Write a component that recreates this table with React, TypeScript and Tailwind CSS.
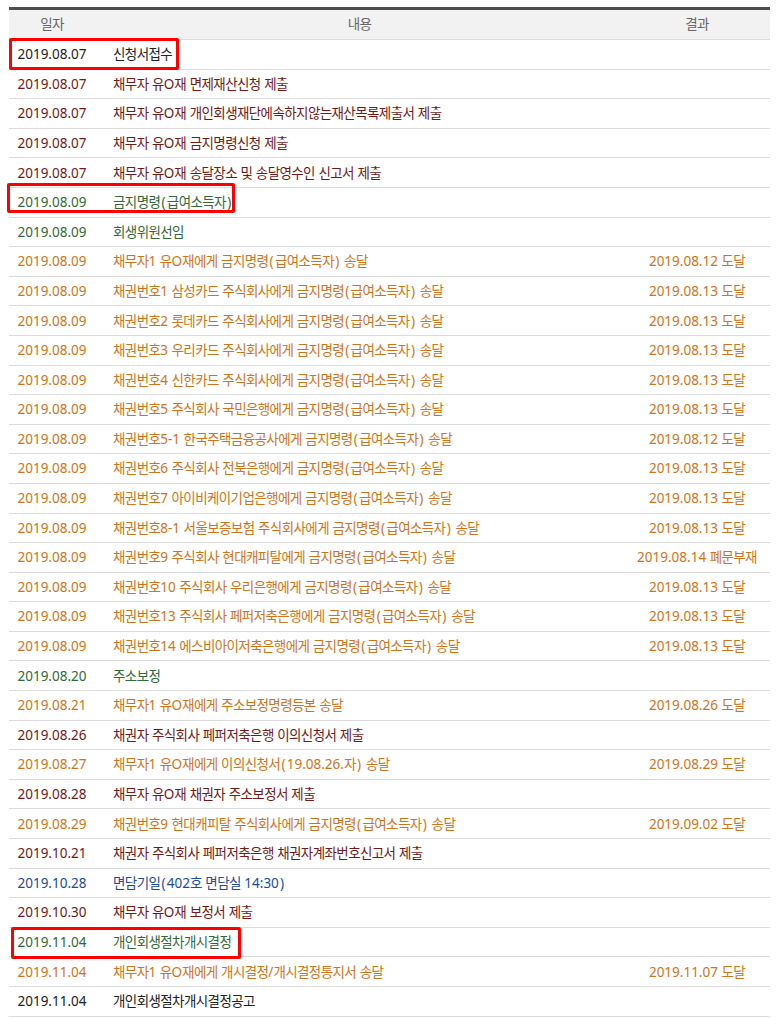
import React from "react";

type Row = { d: string; c: string; r?: string; t: "k" | "m" | "g" | "o" | "b" };

const rows: Row[] = [
  { d: "2019.08.07", c: "신청서접수", t: "k" },
  { d: "2019.08.07", c: "채무자 유O재 면제재산신청 제출", t: "m" },
  { d: "2019.08.07", c: "채무자 유O재 개인회생재단에속하지않는재산목록제출서 제출", t: "m" },
  { d: "2019.08.07", c: "채무자 유O재 금지명령신청 제출", t: "m" },
  { d: "2019.08.07", c: "채무자 유O재 송달장소 및 송달영수인 신고서 제출", t: "m" },
  { d: "2019.08.09", c: "금지명령(급여소득자)", t: "g" },
  { d: "2019.08.09", c: "회생위원선임", t: "g" },
  { d: "2019.08.09", c: "채무자1 유O재에게 금지명령(급여소득자) 송달", r: "2019.08.12 도달", t: "o" },
  { d: "2019.08.09", c: "채권번호1 삼성카드 주식회사에게 금지명령(급여소득자) 송달", r: "2019.08.13 도달", t: "o" },
  { d: "2019.08.09", c: "채권번호2 롯데카드 주식회사에게 금지명령(급여소득자) 송달", r: "2019.08.13 도달", t: "o" },
  { d: "2019.08.09", c: "채권번호3 우리카드 주식회사에게 금지명령(급여소득자) 송달", r: "2019.08.13 도달", t: "o" },
  { d: "2019.08.09", c: "채권번호4 신한카드 주식회사에게 금지명령(급여소득자) 송달", r: "2019.08.13 도달", t: "o" },
  { d: "2019.08.09", c: "채권번호5 주식회사 국민은행에게 금지명령(급여소득자) 송달", r: "2019.08.13 도달", t: "o" },
  { d: "2019.08.09", c: "채권번호5-1 한국주택금융공사에게 금지명령(급여소득자) 송달", r: "2019.08.12 도달", t: "o" },
  { d: "2019.08.09", c: "채권번호6 주식회사 전북은행에게 금지명령(급여소득자) 송달", r: "2019.08.13 도달", t: "o" },
  { d: "2019.08.09", c: "채권번호7 아이비케이기업은행에게 금지명령(급여소득자) 송달", r: "2019.08.13 도달", t: "o" },
  { d: "2019.08.09", c: "채권번호8-1 서울보증보험 주식회사에게 금지명령(급여소득자) 송달", r: "2019.08.13 도달", t: "o" },
  { d: "2019.08.09", c: "채권번호9 주식회사 현대캐피탈에게 금지명령(급여소득자) 송달", r: "2019.08.14 폐문부재", t: "o" },
  { d: "2019.08.09", c: "채권번호10 주식회사 우리은행에게 금지명령(급여소득자) 송달", r: "2019.08.13 도달", t: "o" },
  { d: "2019.08.09", c: "채권번호13 주식회사 페퍼저축은행에게 금지명령(급여소득자) 송달", r: "2019.08.13 도달", t: "o" },
  { d: "2019.08.09", c: "채권번호14 에스비아이저축은행에게 금지명령(급여소득자) 송달", r: "2019.08.13 도달", t: "o" },
  { d: "2019.08.20", c: "주소보정", t: "g" },
  { d: "2019.08.21", c: "채무자1 유O재에게 주소보정명령등본 송달", r: "2019.08.26 도달", t: "o" },
  { d: "2019.08.26", c: "채권자 주식회사 페퍼저축은행 이의신청서 제출", t: "m" },
  { d: "2019.08.27", c: "채무자1 유O재에게 이의신청서(19.08.26.자) 송달", r: "2019.08.29 도달", t: "o" },
  { d: "2019.08.28", c: "채무자 유O재 채권자 주소보정서 제출", t: "m" },
  { d: "2019.08.29", c: "채권번호9 현대캐피탈 주식회사에게 금지명령(급여소득자) 송달", r: "2019.09.02 도달", t: "o" },
  { d: "2019.10.21", c: "채권자 주식회사 페퍼저축은행 채권자계좌번호신고서 제출", t: "m" },
  { d: "2019.10.28", c: "면담기일(402호 면담실 14:30)", t: "b" },
  { d: "2019.10.30", c: "채무자 유O재 보정서 제출", t: "m" },
  { d: "2019.11.04", c: "개인회생절차개시결정", t: "g" },
  { d: "2019.11.04", c: "채무자1 유O재에게 개시결정/개시결정통지서 송달", r: "2019.11.07 도달", t: "o" },
  { d: "2019.11.04", c: "개인회생절차개시결정공고", t: "k" },
];

const colorCls: Record<Row["t"], string> = {
  k: "text-[#222222]",
  m: "text-[#741818]",
  g: "text-[#33693a]",
  o: "text-[#d0741c]",
  b: "text-[#1c4c9c]",
};

function Txt({ s }: { s: string }) {
  const parts = s.match(/[\uAC00-\uD7A3]+|[()]|[^\uAC00-\uD7A3()]+/g) || [];
  return (
    <>
      {parts.map((p, i) =>
        /[\uAC00-\uD7A3]/.test(p) ? (
          <span key={i} className="text-[13.5px] tracking-[-0.6px]">
            {p}
          </span>
        ) : p === "(" || p === ")" ? (
          <span key={i} className="px-[1.25px]">
            {p}
          </span>
        ) : (
          <span key={i}>{p}</span>
        )
      )}
    </>
  );
}

export default function App() {
  return (
    <div
      className="relative min-h-[1018px] w-[777px] bg-white pt-[7px] text-[13.5px]"
      style={{ fontFamily: '"Noto Sans", "Noto Sans CJK KR", sans-serif' }}
    >
      <div className="ml-[9px] w-[761px] border-t-[3px] border-[#4d4d4d]">
        <div className="grid h-[30px] grid-cols-[86px_529px_146px] items-center border-b border-[#dcdcdc] bg-[#f2f2f2] text-[#666666]">
          <div className="text-center">
            <Txt s="일자" />
          </div>
          <div className="text-center">
            <Txt s="내용" />
          </div>
          <div className="text-center">
            <Txt s="결과" />
          </div>
        </div>
        {rows.map((r, i) => (
          <div
            key={i}
            className={`grid h-[29.6px] grid-cols-[86px_529px_146px] items-center border-b border-[#dcdcdc] whitespace-nowrap ${colorCls[r.t]}`}
          >
            <div className="text-center">{r.d}</div>
            <div className="pl-[18px]">
              <Txt s={r.c} />
            </div>
            <div className="text-center">{r.r ? <Txt s={r.r} /> : null}</div>
          </div>
        ))}
      </div>

      <div className="pointer-events-none absolute left-[9px] top-[38px] h-[32px] w-[170px] rounded-[2px] border-[3px] border-[#ff0000]" />
      <div className="pointer-events-none absolute left-[7px] top-[183px] h-[30px] w-[228px] rounded-[2px] border-[3px] border-[#ff0000]" />
      <div className="pointer-events-none absolute left-[11px] top-[927px] h-[32px] w-[230px] rounded-[2px] border-[3px] border-[#ff0000]" />
    </div>
  );
}
